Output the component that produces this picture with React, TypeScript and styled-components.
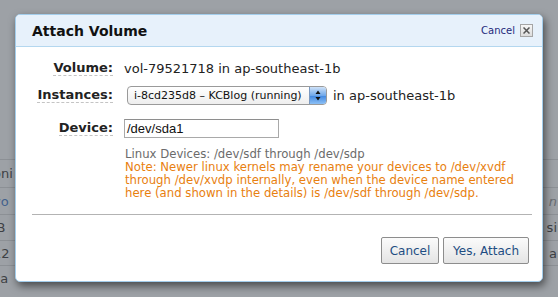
import React from "react";
import styled, { createGlobalStyle } from "styled-components";

const GlobalStyle = createGlobalStyle`
  html, body { margin: 0; padding: 0; }
  body {
    background: #9da1a6;
    font-family: "DejaVu Sans", Verdana, sans-serif;
  }
`;

const Page = styled.div`
  position: relative;
  width: 558px;
  height: 297px;
  overflow: hidden;
  background: #9da1a6;
`;

const BackTable = styled.div`
  display: flex;
  flex-direction: column;
  padding-top: 159px;
`;

const BackRow = styled.div<{ $h: number }>`
  display: flex;
  justify-content: space-between;
  height: ${(p) => p.$h}px;
  align-items: center;
  border-top: 1px solid #8c9095;
  font-size: 13px;
  color: #3b3e42;
`;

const BackCell = styled.span<{ $blue?: boolean }>`
  color: ${(p) => (p.$blue ? "#44628d" : "#3e4145")};
  margin-left: -7px;
`;

const BackCellR = styled.span<{ $italic?: boolean }>`
  font-style: ${(p) => (p.$italic ? "italic" : "normal")};
  color: ${(p) => (p.$italic ? "#6a6e73" : "#3e4145")};
  margin-right: 1px;
`;

const Dialog = styled.div`
  position: absolute;
  left: 15px;
  top: 14px;
  width: 526px;
  height: 266px;
  background: #fff;
  border: 1px solid #a3cdeb;
  border-radius: 5px;
  box-shadow: 2px 4px 8px rgba(0, 0, 0, 0.55);
  display: flex;
  flex-direction: column;
  overflow: hidden;
`;

const Header = styled.div`
  height: 31px;
  background: #e7f1fb;
  border-bottom: 1px solid #b4d7ef;
  display: flex;
  align-items: center;
  justify-content: space-between;
  padding: 0 9px 0 16px;
`;

const Title = styled.h1`
  margin: 0;
  font-size: 14px;
  font-weight: bold;
  color: #111;
`;

const HeaderActions = styled.div`
  display: flex;
  align-items: center;
  gap: 5px;
`;

const HeaderLink = styled.a`
  font-size: 10px;
  color: #1f2b7c;
  text-decoration: none;
`;

const CloseBox = styled.span`
  width: 11px;
  height: 11px;
  border: 1px solid #a5a5a5;
  background: linear-gradient(#f6f6f6, #dcdcdc);
  display: flex;
  align-items: center;
  justify-content: center;
`;

const Body = styled.div`
  padding: 8px 10px 0 16px;
  display: flex;
  flex-direction: column;
`;

const Form = styled.div`
  display: grid;
  grid-template-columns: 81px auto;
  column-gap: 11px;
  align-items: center;
`;

const Label = styled.div<{ $h: number }>`
  height: ${(p) => p.$h}px;
  display: flex;
  align-items: center;
  justify-content: flex-end;
`;

const LabelText = styled.span`
  font-size: 13px;
  font-weight: bold;
  color: #222;
  border-bottom: 1px dashed #c4c4c4;
  line-height: 15px;
`;

const Value = styled.div<{ $h: number }>`
  height: ${(p) => p.$h}px;
  display: flex;
  align-items: center;
  gap: 6px;
  font-size: 13px;
  color: #222;
`;

const Select = styled.div`
  margin-left: 3px;
  width: 198px;
  height: 17px;
  border: 1px solid #9a9a9a;
  border-radius: 4px;
  display: flex;
  align-items: center;
  background: linear-gradient(#ffffff, #eeeeee);
  overflow: hidden;
`;

const SelectText = styled.span`
  flex: 1;
  font-size: 11px;
  padding-left: 6px;
  color: #111;
  white-space: nowrap;
`;

const Stepper = styled.span`
  width: 16px;
  height: 17px;
  background: linear-gradient(#cfe2f8, #6fa8ea 50%, #3f86e0 51%, #8cc0f5);
  border-left: 1px solid #7b99c0;
  display: flex;
  align-items: center;
  justify-content: center;
`;

const Input = styled.div`
  width: 149px;
  height: 17px;
  border: 1px solid #a9a9a9;
  border-top-color: #8e8e8e;
  padding: 0 2px;
  display: flex;
  align-items: center;
  font-family: "Liberation Sans", Arial, sans-serif;
  font-size: 13px;
  color: #111;
`;

const Help = styled.div`
  margin: 1px 0 0 93px;
  font-size: 11.7px;
  line-height: 13px;
`;

const HelpGrey = styled.div`
  color: #6b6b6b;
`;

const HelpNote = styled.div`
  color: #e8800f;
`;

const Rule = styled.hr`
  margin: 14px 0 0 0;
  border: 0;
  border-top: 1px solid #b3b3b3;
  height: 0;
`;

const Footer = styled.div`
  display: flex;
  justify-content: flex-end;
  gap: 4px;
  padding: 22px 13px 0 0;
`;

const Button = styled.button<{ $w: number }>`
  width: ${(p) => p.$w}px;
  height: 27px;
  border: 1px solid #8d8d8d;
  border-radius: 2px;
  background: linear-gradient(#fbfbfb, #e4e4e4);
  font-family: "DejaVu Sans", Verdana, sans-serif;
  font-size: 12px;
  color: #1e4d82;
  padding: 0;
`;

export default function App() {
  return (
    <Page>
      <GlobalStyle />
      <BackTable>
        <BackRow $h={27}>
          <BackCell>oni</BackCell>
          <BackCellR />
        </BackRow>
        <BackRow $h={26}>
          <BackCell $blue>vo</BackCell>
          <BackCellR $italic>n</BackCellR>
        </BackRow>
        <BackRow $h={25}>
          <BackCell>iB</BackCell>
          <BackCellR>si</BackCellR>
        </BackRow>
        <BackRow $h={24}>
          <BackCell>12</BackCell>
          <BackCellR>a</BackCellR>
        </BackRow>
        <BackRow $h={25}>
          <BackCell>ila</BackCell>
          <BackCellR />
        </BackRow>
      </BackTable>
      <Dialog>
        <Header>
          <Title>Attach Volume</Title>
          <HeaderActions>
            <HeaderLink>Cancel</HeaderLink>
            <CloseBox>
              <svg width="7" height="7" viewBox="0 0 7 7">
                <path d="M0.5 0.5 L6.5 6.5 M6.5 0.5 L0.5 6.5" stroke="#555" strokeWidth="1.5" />
              </svg>
            </CloseBox>
          </HeaderActions>
        </Header>
        <Body>
          <Form>
            <Label $h={26}>
              <LabelText>Volume:</LabelText>
            </Label>
            <Value $h={26}>vol-79521718 in ap-southeast-1b</Value>
            <Label $h={28}>
              <LabelText>Instances:</LabelText>
            </Label>
            <Value $h={28}>
              <Select>
                <SelectText>i-8cd235d8 – KCBlog (running)</SelectText>
                <Stepper>
                  <svg width="6" height="11" viewBox="0 0 6 11">
                    <path d="M3 0.5 L5.5 4 L0.5 4 Z M3 10.5 L5.5 7 L0.5 7 Z" fill="#111" />
                  </svg>
                </Stepper>
              </Select>
              <span>in ap-southeast-1b</span>
            </Value>
            <Label $h={38}>
              <LabelText>Device:</LabelText>
            </Label>
            <Value $h={38}>
              <Input>/dev/sda1</Input>
            </Value>
          </Form>
          <Help>
            <HelpGrey>Linux Devices: /dev/sdf through /dev/sdp</HelpGrey>
            <HelpNote>
              Note: Newer linux kernels may rename your devices to /dev/xvdf
              <br />
              through /dev/xvdp internally, even when the device name entered
              <br />
              here (and shown in the details) is /dev/sdf through /dev/sdp.
            </HelpNote>
          </Help>
          <Rule />
        </Body>
        <Footer>
          <Button $w={58}>Cancel</Button>
          <Button $w={86}>Yes, Attach</Button>
        </Footer>
      </Dialog>
    </Page>
  );
}
